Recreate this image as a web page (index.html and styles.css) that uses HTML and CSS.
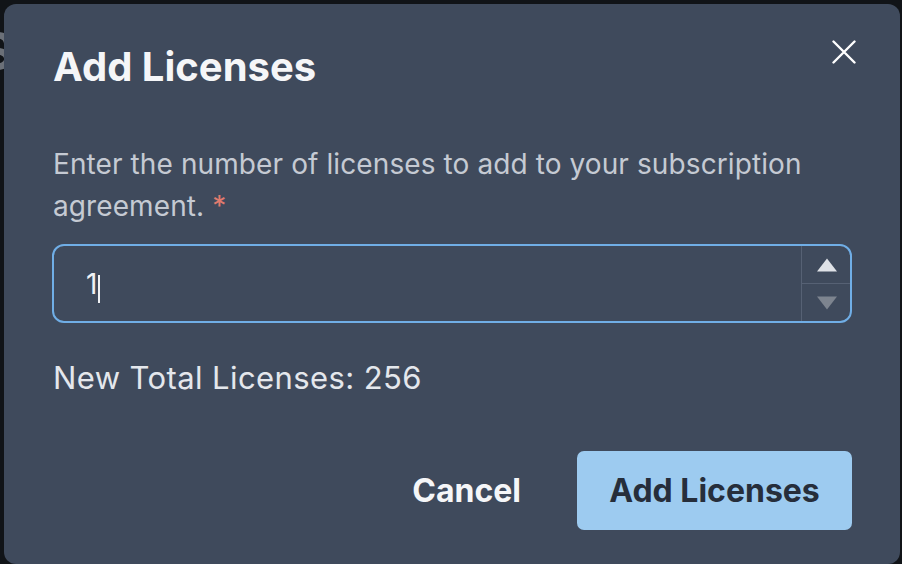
FILE: index.html
```html
<!DOCTYPE html>
<html>
<head>
<meta charset="utf-8">
<link rel="stylesheet" href="styles.css">
</head>
<body>
<div class="backdrop">
  <span class="behind">S</span>
  <div class="dialog">
    <div class="header">
      <h1 class="title">Add Licenses</h1>
      <button class="close" aria-label="Close">
        <svg width="24" height="24" viewBox="0 0 24 24"><path d="M1.5 1.5L22.5 22.5M22.5 1.5L1.5 22.5" stroke="#ffffff" stroke-width="2.4" stroke-linecap="round"/></svg>
      </button>
    </div>
    <p class="label">Enter the number of licenses to add to your subscription agreement. <span class="req">*</span></p>
    <div class="field">
      <div class="value"><span class="num">1</span><span class="caret"></span></div>
      <div class="spin">
        <div class="spin-btn"><svg width="20" height="14" viewBox="0 0 20 14"><path d="M10 0.5L20 13.5H0Z" fill="#dfe2e7"/></svg></div>
        <div class="spin-btn"><svg width="20" height="14" viewBox="0 0 20 14"><path d="M0 0.5H20L10 13.5Z" fill="#7d848f"/></svg></div>
      </div>
    </div>
    <p class="total">New Total Licenses: 256</p>
    <div class="actions">
      <button class="btn-cancel">Cancel</button>
      <button class="btn-primary">Add Licenses</button>
    </div>
  </div>
</div>
</body>
</html>
```
FILE: styles.css
```css
html, body {
  margin: 0;
  padding: 0;
  background: #111418;
  font-family: Inter, "Noto Sans", sans-serif;
  overflow: hidden;
}
.backdrop {
  position: relative;
  width: 902px;
  height: 564px;
  padding: 4px 2px 0 4px;
  box-sizing: border-box;
}
.behind {
  position: absolute;
  left: -20px;
  top: 20px;
  font-size: 52px;
  font-weight: 700;
  color: #6b7078;
}
.dialog {
  position: relative;
  background: #3f4a5c;
  border-radius: 12px;
  height: 560px;
  width: 896px;
  box-sizing: border-box;
  padding: 36px 48px 0 48px;
}
.header {
  display: flex;
  justify-content: space-between;
  align-items: flex-start;
}
.title {
  margin: 3px 0 0 1px;
  font-size: 40px;
  font-weight: 700;
  color: #f5f6f8;
  line-height: 48px;
}
.close {
  background: none;
  border: none;
  padding: 0;
  margin: 0 -4px 0 0;
  width: 24px;
  height: 24px;
  display: flex;
  cursor: pointer;
}
.label {
  margin: 52px 0 0 1px;
  font-size: 28px;
  line-height: 42px;
  letter-spacing: 0.1px;
  color: #c5cad3;
}
.req {
  color: #e07b6e;
}
.field {
  margin-top: 17px;
  height: 79px;
  box-sizing: border-box;
  border: 2px solid #70aee6;
  border-radius: 12px;
  display: flex;
}
.value {
  flex: 1;
  display: flex;
  align-items: center;
  padding-left: 32px;
  font-size: 28px;
  color: #f0f2f5;
}
.caret {
  display: block;
  width: 2px;
  height: 28px;
  background: #f0f2f5;
  margin: 10px 0 0 1px;
}
.spin {
  width: 48px;
  border-left: 1px solid #566174;
  display: flex;
  flex-direction: column;
}
.spin-btn {
  flex: 1;
  display: flex;
  align-items: center;
  justify-content: center;
}
.spin-btn svg {
  margin-left: 2px;
}
.spin-btn + .spin-btn {
  border-top: 1px solid #566174;
}
.total {
  margin: 35px 0 0 1px;
  font-size: 31px;
  line-height: 40px;
  letter-spacing: 0.4px;
  color: #e4e7ec;
}
.actions {
  margin-top: 53px;
  display: flex;
  justify-content: flex-end;
  align-items: center;
  gap: 56px;
}
.btn-cancel {
  background: none;
  border: none;
  font-family: inherit;
  font-size: 32px;
  font-weight: 700;
  color: #f5f6f8;
  padding: 0;
}
.btn-primary {
  background: #9dcbf0;
  border: none;
  border-radius: 7px;
  width: 275px;
  height: 79px;
  font-family: inherit;
  font-size: 32px;
  font-weight: 700;
  color: #262e3b;
}
```
